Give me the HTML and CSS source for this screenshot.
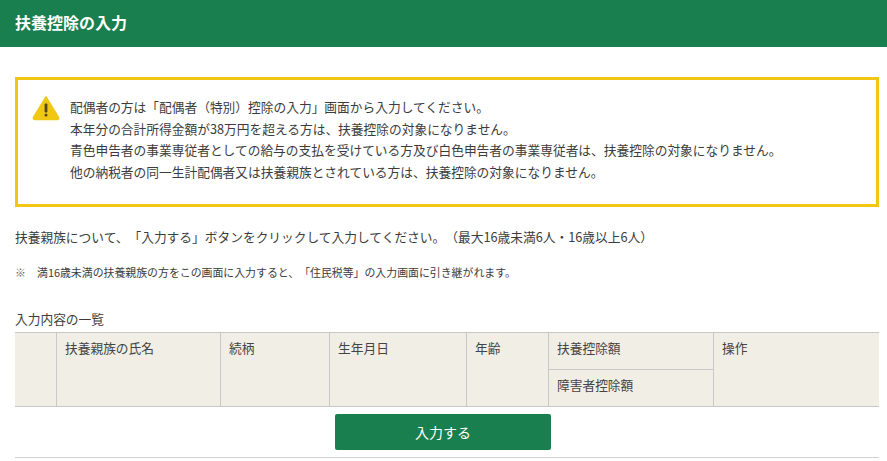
FILE: index.html
```html
<!DOCTYPE html>
<html lang="ja">
<head>
<meta charset="utf-8">
<title>扶養控除の入力</title>
<link rel="stylesheet" href="styles.css">
</head>
<body>
<header class="page-header"><h1 class="page-title">扶養控除の入力</h1></header>
<main class="content">
  <section class="notice">
    <svg class="notice-icon" width="28" height="25" viewBox="0 0 28 25" aria-hidden="true">
      <path class="icon-fill" d="M14 1 L26.5 21.5 Q27 23.5 25 23.5 L3 23.5 Q1 23.5 1.5 21.5 Z" stroke-linejoin="round"/>
      <rect class="icon-mark" x="12.6" y="7.5" width="2.8" height="9" rx="1"/>
      <rect class="icon-mark" x="12.6" y="17.8" width="2.8" height="2.8" rx="1"/>
    </svg>
    <div class="notice-text">
      <p>配偶者の方は「配偶者（特別）控除の入力」画面から入力してください。</p>
      <p>本年分の合計所得金額が38万円を超える方は、扶養控除の対象になりません。</p>
      <p>青色申告者の事業専従者としての給与の支払を受けている方及び白色申告者の事業専従者は、扶養控除の対象になりません。</p>
      <p>他の納税者の同一生計配偶者又は扶養親族とされている方は、扶養控除の対象になりません。</p>
    </div>
  </section>
  <p class="lead">扶養親族について、「入力する」ボタンをクリックして入力してください。（最大16歳未満6人・16歳以上6人）</p>
  <p class="note"><span class="note-mark">※</span>満16歳未満の扶養親族の方をこの画面に入力すると、「住民税等」の入力画面に引き継がれます。</p>
  <h2 class="list-title">入力内容の一覧</h2>
  <div class="table">
    <div class="cell span-2 col-check"></div>
    <div class="cell span-2">扶養親族の氏名</div>
    <div class="cell span-2">続柄</div>
    <div class="cell span-2">生年月日</div>
    <div class="cell span-2">年齢</div>
    <div class="cell split-top">扶養控除額</div>
    <div class="cell span-2 last">操作</div>
    <div class="cell split-bottom">障害者控除額</div>
  </div>
  <div class="actions"><button class="primary" type="button">入力する</button></div>
</main>
</body>
</html>
```

FILE: styles.css
```css
* { box-sizing: border-box; }
html, body { margin: 0; padding: 0; }
body {
  background: #fff;
  color: #3c3c3c;
  font-family: "Noto Sans CJK JP", "Noto Sans", sans-serif;
  font-size: 12.72px;
  text-spacing-trim: space-all;
  overflow: hidden;
}
p, h1, h2 { margin: 0; font-weight: normal; }
.page-header {
  height: 47px;
  background: #1a7f4e;
  display: flex;
  align-items: center;
  padding: 0 15px 4px;
}
.page-title { color: #fff; font-size: 16px; font-weight: 700; line-height: 20px; }
.content { padding: 30px 8px 0 15px; }
.notice {
  height: 130px;
  border: 3px solid #f0c814;
  padding: 16px 0 0 14px;
  display: flex;
  align-items: flex-start;
}
.notice-icon { flex: none; margin: 0 10px 0 0; }
.icon-fill { fill: #f0c814; stroke: #f0c814; stroke-width: 1.5; }
.icon-mark { fill: #55471a; }
.notice-text p { line-height: 21.6px; height: 21.6px; white-space: nowrap; }
.lead { margin-top: 20px; line-height: 20px; white-space: nowrap; }
.note { margin-top: 16px; line-height: 18px; font-size: 10.9px; display: flex; white-space: nowrap; }
.note-mark { width: 22px; color: #666; }
.list-title { margin-top: 29px; font-size: 12.72px; line-height: 18px; height: 18px; }
.table {
  display: grid;
  grid-template-columns: 42px 164px 109px 137px 82px 165px 165px;
  grid-template-rows: 37px 37px;
  margin-top: 4px;
  height: 75px;
  background: #f1eee5;
  border-top: 1px solid #c8c8c4;
  border-bottom: 1px solid #c8c8c4;
  color: #444;
}
.cell {
  padding: 6px 8px 0 8px;
  line-height: 18px;
  border-right: 1px solid #c8c8c4;
}
.span-2 { grid-row: span 2; }
.col-check { grid-row: 1 / span 2; }
.split-top { grid-column: 6; grid-row: 1; border-bottom: 1px solid #c8c8c4; }
.split-bottom { grid-column: 6; grid-row: 2; }
.last { border-right: 0; grid-column: 7; grid-row: 1 / span 2; }
.actions {
  display: flex;
  justify-content: center;
  margin-top: 7px;
  padding: 0 8px 7px 0;
  height: 44px;
  border-bottom: 1px solid #d0d0d0;
}
.primary {
  width: 216px;
  height: 36px;
  border: 0;
  border-radius: 2px;
  background: #1a7f4e;
  color: #fff;
  font: 400 14px "Noto Sans CJK JP", sans-serif;
}
```
